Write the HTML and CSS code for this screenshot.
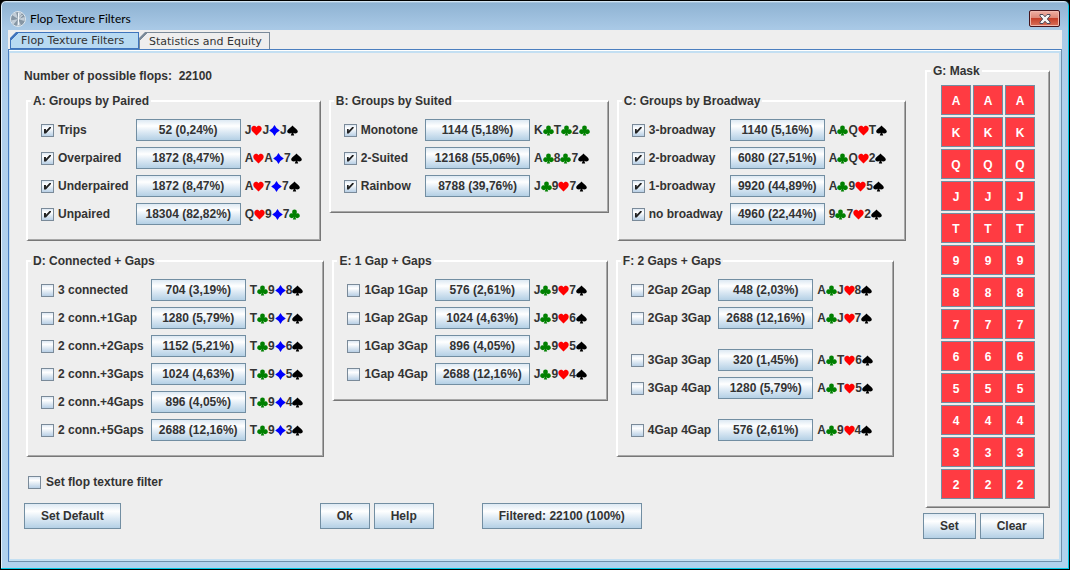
FILE: index.html
```html
<!DOCTYPE html>
<html lang="en">
<head>
  <meta charset="UTF-8" />
  <meta name="viewport" content="width=device-width, initial-scale=1" />
  <title>Flop Texture Filters</title>
  <link rel="stylesheet" href="styles.css">
</head>
<body>
  <div class="window">
    <header class="titlebar">
      <svg class="app-icon" width="16" height="16" viewBox="0 0 16 16">
        <circle cx="8" cy="8" r="7.5" fill="#8696a4" stroke="#dfe8ef" />
        <path d="M8 8L2 4A7 7 0 0 1 6 1.300zM8 8L8 1A7 7 0 0 1 12 2.300zM8 8L14.500 6A7 7 0 0 1 14.500 10zM8 8L11 14.300A7 7 0 0 1 7 15zM8 8L3.500 13.400A7 7 0 0 1 1.200 9.500z" fill="#c3ced8" />
        <path d="M8.500 2v12M8.500 8l4-4" stroke="#f3f7fa" stroke-width="1" fill="none" />
      </svg>
      <h1>Flop Texture Filters</h1>
      <button class="close" aria-label="Close">
        <svg width="12" height="10" viewBox="0 0 12 10">
          <path d="M1 .5h3l2 2.300 2-2.300h3v1.500L8.300 5 11 8v1.500H8L6 7.200 4 9.500H1V8l2.700-3L1 2z" fill="#f4f4f4" stroke="#4e4a58" stroke-width="1" />
        </svg>
      </button>
    </header>

    <main class="client">
      <nav class="tabs">
        <button class="tab selected">Flop Texture Filters</button>
        <button class="tab">Statistics and Equity</button>
      </nav>

      <div class="page">
        <div class="filters">
          <p class="count">Number of possible flops:&nbsp; 22100</p>

          <div class="groups" id="groupsTop"></div>
          <div class="groups roomy" id="groupsBottom"></div>

          <label class="check enable"><input type="checkbox"> Set flop texture filter</label>

          <div class="actions">
            <button class="btn">Set Default</button>
            <div class="dialog-buttons">
              <button class="btn">Ok</button>
              <button class="btn">Help</button>
            </div>
            <button class="btn">Filtered: 22100 (100%)</button>
          </div>
        </div>

        <aside class="side">
          <fieldset class="group mask">
            <legend>G: Mask</legend>
            <div class="mask-grid" id="maskGrid"></div>
          </fieldset>
          <div class="mask-actions">
            <button class="btn">Set</button>
            <button class="btn">Clear</button>
          </div>
        </aside>
      </div>
    </main>
  </div>

  <script src="script.js"></script>
</body>
</html>
```
FILE: styles.css
```css
* {
  box-sizing: border-box;
}
body {
  margin: 0;
  background: #000;
  color: #333;
  font: bold 12px/14px "Liberation Sans", Arial, sans-serif;
}
button, input {
  font: inherit;
  color: inherit;
  margin: 0;
}
.window {
  display: flex;
  flex-direction: column;
  min-height: 100vh;
  padding: 1px 7px 7px;
  border: 1px solid #000;
  border-radius: 6px 6px 0 0;
  background: linear-gradient(#e8f4fc 0, #8fb3d3 2px, #a9c9e6 28px, #b0d0ec 100px, #b0d2ee);
  box-shadow: inset -1px -1px #00c8e4, inset 1px 0 #e4f2fc;
}
.titlebar {
  display: flex;
  align-items: center;
  gap: 4px;
  height: 28px;
  padding: 5px 2px 0;
}
.titlebar h1 {
  flex: 1;
  margin: 0;
  color: #000;
  font: 12px/16px Lato, "Segoe UI", sans-serif;
}
.close {
  display: flex;
  align-items: center;
  justify-content: center;
  width: 31px;
  height: 17px;
  padding: 0;
  border: 1px solid #45141c;
  border-radius: 2px;
  background: linear-gradient(#f0b0a4, #dd8676 48%, #c5402a 50%, #d8705a);
  box-shadow: inset 0 0 0 1px #f0b8ae;
}
.client {
  flex: 1;
  display: flex;
  flex-direction: column;
  background: #eee;
}
.tabs {
  display: flex;
  align-items: flex-end;
  height: 19px;
  padding: 2px 0 0 2px;
}
.tab {
  width: 131px;
  height: 17px;
  padding: 0 9px;
  border: 1px solid #7a8a99;
  border-bottom: 0;
  background: linear-gradient(135deg, #7a8a99 5px, #eee 5px);
  font: 11px/15px "DejaVu Sans", Verdana, sans-serif;
  text-align: left;
  white-space: nowrap;
  clip-path: polygon(6px 0, 100% 0, 100% 100%, 0 100%, 0 6px);
}
.tab.selected {
  width: 129px;
  padding: 0 10px;
  border: 1px solid #3f74bc;
  background: linear-gradient(135deg, #3f74bc 5px, #b8daf2 5px);
}
.page {
  flex: 1;
  display: flex;
  justify-content: space-between;
  border: 1px solid #6f90ac;
  border-top-color: #4a7ebf;
  border-left-color: #4a7ebf;
  box-shadow: inset 0 1px #fff, inset 0 3px #c3dff2, inset -2px -2px #c3dff2, inset 1px 0 #c3dff2;
  padding: 14px 11px 20px 15px;
}
.count {
  margin: 5px 0 11px;
}
.groups {
  display: flex;
  align-items: flex-start;
  gap: 8px;
  margin: 0 0 13px 2px;
}
.group {
  min-width: 0;
  margin: 0;
  padding: 11px 18px 15px 13px;
  border: 2px solid #fff;
  border-right: 1px solid #777;
  border-bottom: 1px solid #777;
  box-shadow: inset -1px -1px #a8a8a8;
}
.roomy .group {
  padding-right: 20px;
}
.group legend {
  margin-left: -10px;
  padding: 0 2px;
}
.rows {
  display: grid;
  grid-template-columns: auto 95px auto;
  align-items: center;
  gap: 6px 4px;
}
.rows.wide {
  grid-template-columns: auto 105px auto;
}
.spacer {
  grid-column: 1 / -1;
  height: 8px;
}
.check {
  display: flex;
  align-items: center;
  gap: 4px;
  padding-right: 3px;
  white-space: nowrap;
}
.check input {
  appearance: none;
  display: grid;
  place-items: center;
  width: 13px;
  height: 13px;
  border: 1px solid #7a8a99;
  background: linear-gradient(#dde8f3, #fff 30%, #b8cfe5);
}
.check input:checked::before {
  content: "";
  width: 7px;
  height: 7px;
  background: #222;
  clip-path: polygon(0 35%, 28% 35%, 28% 60%, 85% 0, 100% 0, 100% 20%, 28% 100%, 0 100%);
}
.btn {
  height: 26px;
  padding: 0 16px;
  border: 1px solid #728ea2;
  background: linear-gradient(#dde9f3, #fff 30%, #dce9f4 60%, #b4d0e5);
  white-space: nowrap;
}
.rows .btn {
  height: 22px;
  padding: 0;
}
.cards {
  display: flex;
  align-items: center;
  white-space: nowrap;
}
.cards svg {
  width: 11px;
  height: 11px;
}
.heart { fill: #f00; }
.diamond { fill: #00f; }
.club { fill: #008000; }
.spade { fill: #000; }
.enable {
  gap: 5px;
  margin: 18px 0 0 4px;
}
.actions {
  display: flex;
  margin-top: 14px;
}
.dialog-buttons {
  display: flex;
  gap: 4px;
  margin: 0 48px 0 199px;
}
.mask {
  margin-left: 2px;
  padding: 7px 14px 8px;
}
.mask-grid {
  display: grid;
  grid-template-columns: repeat(3, 30px);
  grid-auto-rows: 30px;
  gap: 2px;
}
.mask-grid button {
  padding: 2px 0 0;
  border: 1px solid #728ea2;
  background: #ff3b42;
  color: #fff;
}
.mask-actions {
  display: flex;
  gap: 4px;
  margin-top: 5px;
}
```
FILE: script.js
```js
const suits = {
  h: ['heart', 'M5.500 10.500L1 6C-.7 3.500 1 .8 3 .8c1.300 0 2.100.7 2.500 1.500C5.900 1.500 6.700.8 8 .8c2 0 3.700 2.700 2 5.200z'],
  d: ['diamond', 'M5.500 0Q7 3.500 10.800 5.500 7 7.500 5.500 11 4 7.500.2 5.500 4 3.500 5.500 0z'],
  c: ['club', 'M3.100 3a2.400 2.400 0 1 1 4.800 0a2.400 2.400 0 0 1-.6 1.500a2.400 2.400 0 1 1-1.100 3.300L7.200 10.500H3.800L4.800 7.800A2.400 2.400 0 1 1 3.700 4.500A2.400 2.400 0 0 1 3.100 3z'],
  s: ['spade', 'M5.500 .5C7 2.700 10.800 4.500 10.800 6.600c0 2-3.200 2.500-4.500 1.200l.9 2.700H3.800l.9-2.700C3.400 9.100.2 8.600.2 6.600.2 4.500 4 2.700 5.500.5z']
};

// label, count, example flop, extra space above
const topGroups = [
  { title: 'A: Groups by Paired', wide: true, checked: true, rows: [
    ['Trips', '52 (0,24%)', 'JhJdJs'],
    ['Overpaired', '1872 (8,47%)', 'AhAd7s'],
    ['Underpaired', '1872 (8,47%)', 'Ah7d7s'],
    ['Unpaired', '18304 (82,82%)', 'Qh9d7c']
  ] },
  { title: 'B: Groups by Suited', wide: true, checked: true, rows: [
    ['Monotone', '1144 (5,18%)', 'KcTc2c'],
    ['2-Suited', '12168 (55,06%)', 'Ac8c7s'],
    ['Rainbow', '8788 (39,76%)', 'Jc9h7s']
  ] },
  { title: 'C: Groups by Broadway', checked: true, rows: [
    ['3-broadway', '1140 (5,16%)', 'AcQhTs'],
    ['2-broadway', '6080 (27,51%)', 'AcQh2s'],
    ['1-broadway', '9920 (44,89%)', 'Ac9h5s'],
    ['no broadway', '4960 (22,44%)', '9c7h2s']
  ] }
];

const bottomGroups = [
  { title: 'D: Connected + Gaps', rows: [
    ['3 connected', '704 (3,19%)', 'Tc9d8s'],
    ['2 conn.+1Gap', '1280 (5,79%)', 'Tc9d7s'],
    ['2 conn.+2Gaps', '1152 (5,21%)', 'Tc9d6s'],
    ['2 conn.+3Gaps', '1024 (4,63%)', 'Tc9d5s'],
    ['2 conn.+4Gaps', '896 (4,05%)', 'Tc9d4s'],
    ['2 conn.+5Gaps', '2688 (12,16%)', 'Tc9d3s']
  ] },
  { title: 'E: 1 Gap + Gaps', rows: [
    ['1Gap 1Gap', '576 (2,61%)', 'Jc9h7s'],
    ['1Gap 2Gap', '1024 (4,63%)', 'Jc9h6s'],
    ['1Gap 3Gap', '896 (4,05%)', 'Jc9h5s'],
    ['1Gap 4Gap', '2688 (12,16%)', 'Jc9h4s']
  ] },
  { title: 'F: 2 Gaps + Gaps', rows: [
    ['2Gap 2Gap', '448 (2,03%)', 'AcJh8s'],
    ['2Gap 3Gap', '2688 (12,16%)', 'AcJh7s'],
    ['3Gap 3Gap', '320 (1,45%)', 'AcTh6s', true],
    ['3Gap 4Gap', '1280 (5,79%)', 'AcTh5s'],
    ['4Gap 4Gap', '576 (2,61%)', 'Ac9h4s', true]
  ] }
];

function drawCards(flop) {
  return flop.replace(/(.)([hdcs])/g, (m, rank, suit) => {
    const [name, path] = suits[suit];
    return `<span>${rank}</span><svg class="${name}" viewBox="0 0 11 11"><path d="${path}"/></svg>`;
  });
}

function drawGroup(group) {
  const rows = group.rows.map(([label, count, flop, spaced]) => `
    ${spaced ? '<div class="spacer"></div>' : ''}
    <label class="check"><input type="checkbox"${group.checked ? ' checked' : ''}> ${label}</label>
    <button class="btn">${count}</button>
    <span class="cards">${drawCards(flop)}</span>`).join('');
  return `<fieldset class="group"><legend>${group.title}</legend>
    <div class="rows${group.wide ? ' wide' : ''}">${rows}</div></fieldset>`;
}

document.getElementById('groupsTop').innerHTML = topGroups.map(drawGroup).join('');
document.getElementById('groupsBottom').innerHTML = bottomGroups.map(drawGroup).join('');

document.getElementById('maskGrid').innerHTML = [...'AKQJT98765432']
  .map(rank => `<button>${rank}</button>`.repeat(3)).join('');
```
